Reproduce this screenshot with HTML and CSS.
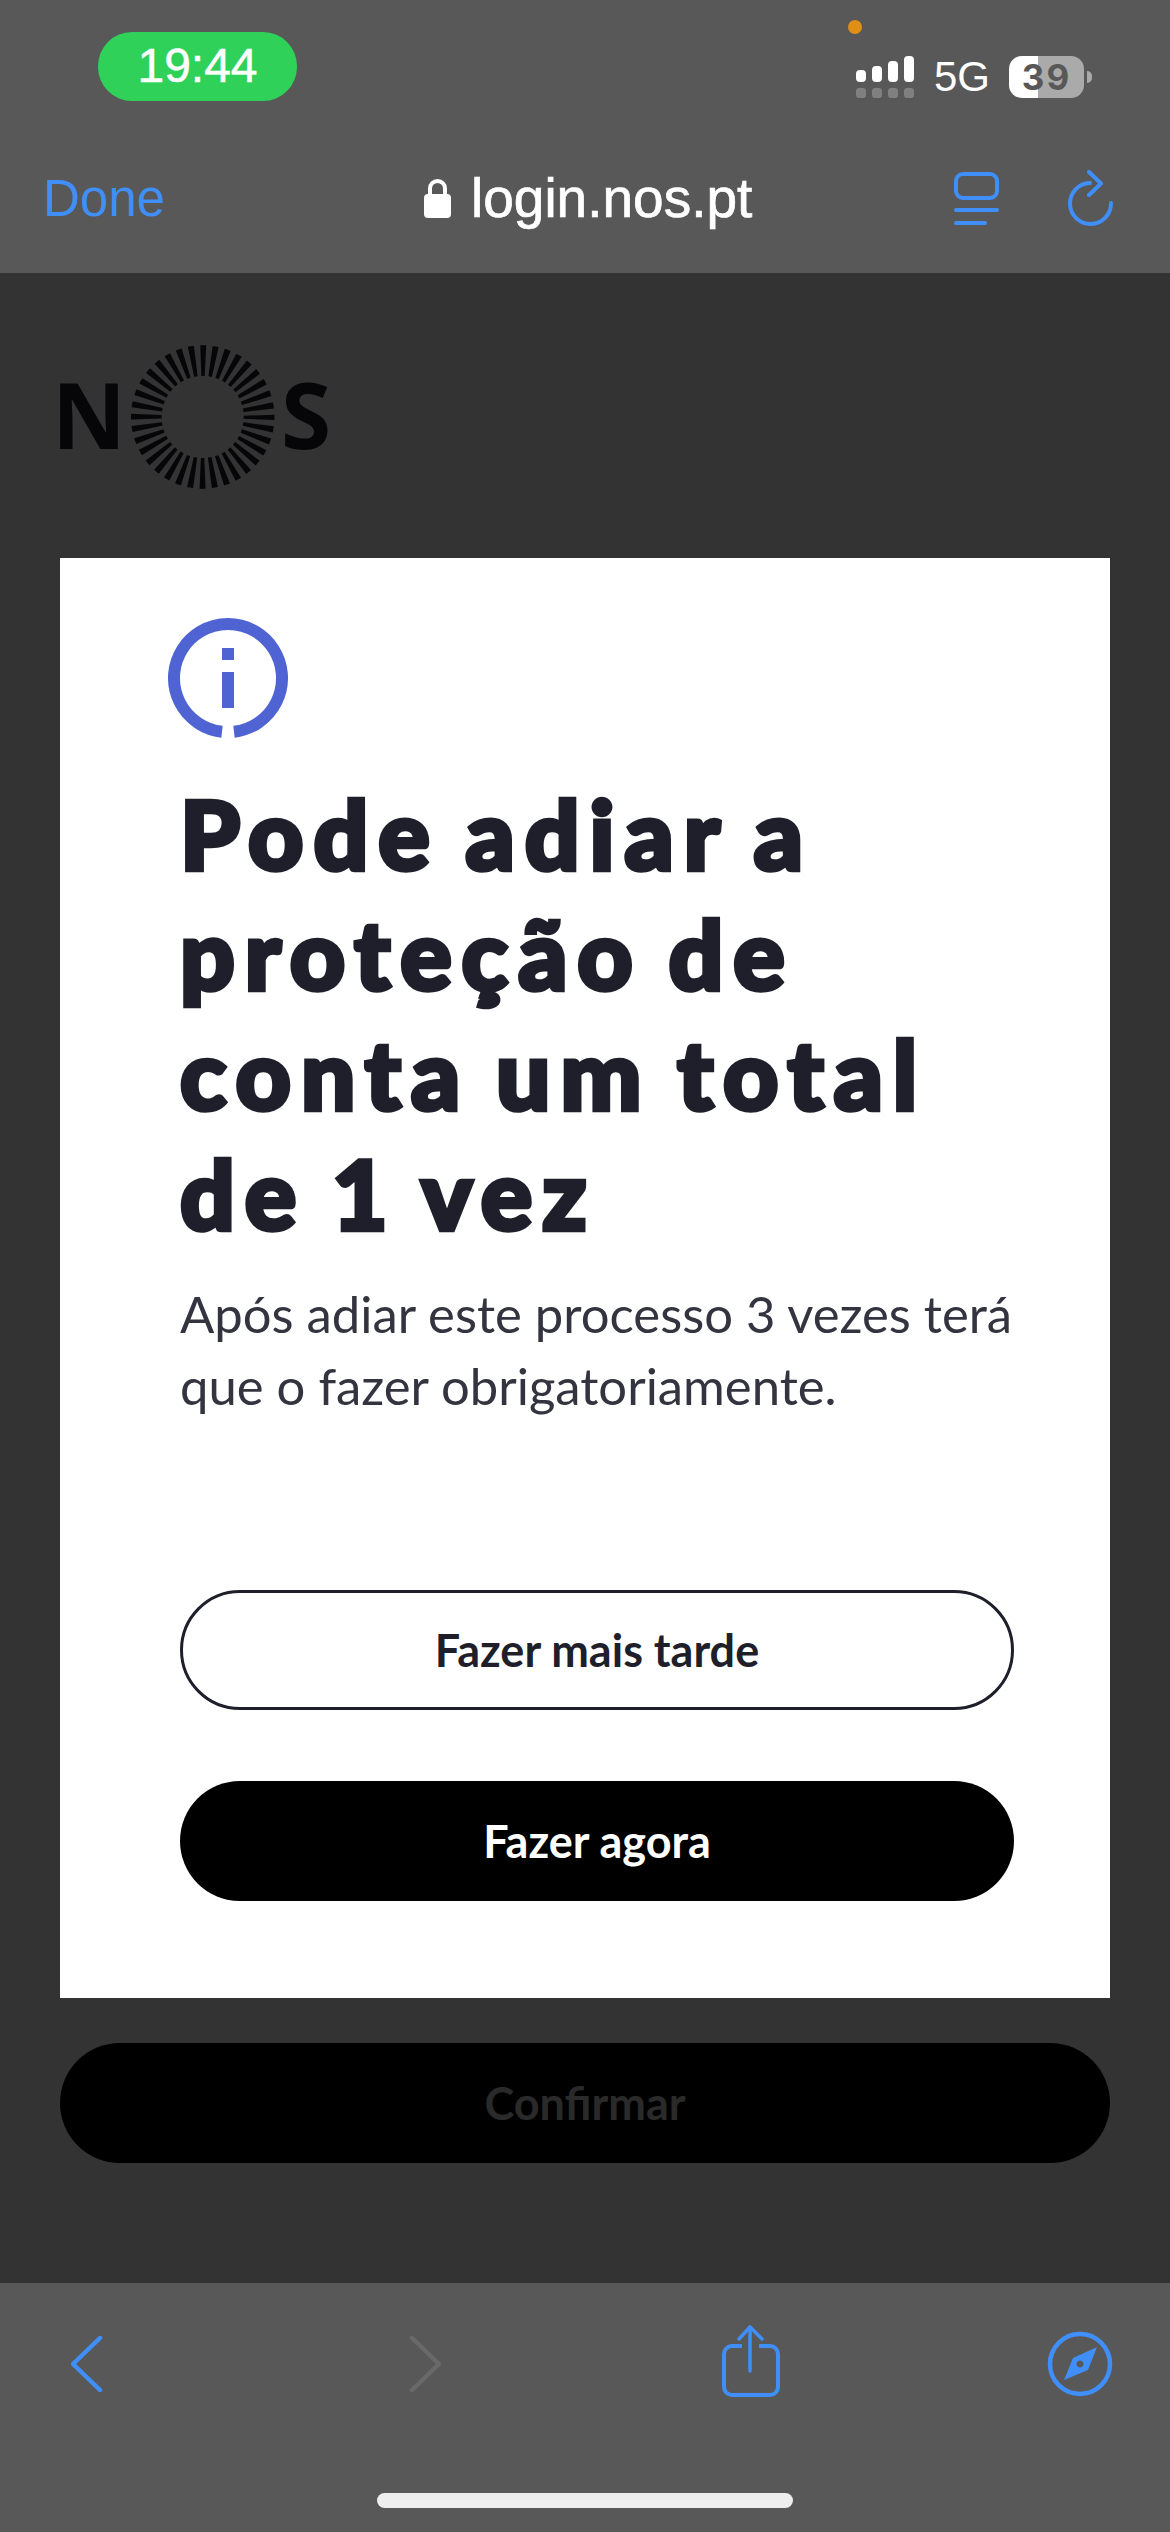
FILE: index.html
```html
<!DOCTYPE html>
<html lang="pt">
<head>
    <meta charset="UTF-8">
    <meta name="viewport" content="width=device-width, initial-scale=1.0">
    <title>login.nos.pt</title>
    <link rel="stylesheet" href="styles.css">
</head>
<body>
    <header class="browser-top">
        <span class="mic-dot"></span>
        <div class="status-row">
            <div class="clock">19:44</div>
            <div class="status-right">
                <svg class="signal" width="58" height="42" viewBox="0 0 58 42">
                    <rect x="0" y="14" width="10" height="12" rx="4" fill="#fff"/>
                    <rect x="16" y="10" width="10" height="16" rx="4" fill="#fff"/>
                    <rect x="32" y="5" width="10" height="21" rx="4" fill="#fff"/>
                    <rect x="48" y="0" width="10" height="26" rx="4" fill="#fff"/>
                    <rect x="0" y="32" width="10" height="10" rx="3" fill="#808080"/>
                    <rect x="16" y="32" width="10" height="10" rx="3" fill="#808080"/>
                    <rect x="32" y="32" width="10" height="10" rx="3" fill="#808080"/>
                    <rect x="48" y="32" width="10" height="10" rx="3" fill="#808080"/>
                </svg>
                <span class="network">5G</span>
                <div class="battery">39</div>
                <span class="battery-nub"></span>
            </div>
        </div>
        <div class="nav-row">
            <span class="done">Done</span>
            <div class="address">
                <svg class="lock" width="27" height="39" viewBox="0 0 27 39">
                    <path d="M6 18V9.500a7.500 7.500 0 0 1 15 0V18" fill="none" stroke="#fff" stroke-width="4"/>
                    <rect x="0" y="15" width="27" height="24" rx="4" fill="#fff"/>
                </svg>
                <span>login.nos.pt</span>
            </div>
            <svg class="tabs-icon" width="45" height="54" viewBox="0 0 45 54">
                <rect x="2" y="2" width="41" height="24" rx="7" fill="none" stroke="#408ef8" stroke-width="4"/>
                <line x1="2" y1="38" x2="43" y2="38" stroke="#408ef8" stroke-width="4" stroke-linecap="round"/>
                <line x1="2" y1="51" x2="31" y2="51" stroke="#408ef8" stroke-width="4" stroke-linecap="round"/>
            </svg>
            <svg class="reload-icon" width="48" height="58" viewBox="0 0 48 58">
                <path d="M44 33A20.500 20.500 0 1 1 23 13" fill="none" stroke="#408ef8" stroke-width="4" stroke-linecap="round"/>
                <path d="M22 2L34 13.500L22 25" fill="none" stroke="#408ef8" stroke-width="4" stroke-linecap="round" stroke-linejoin="round"/>
            </svg>
        </div>
    </header>

    <main class="page">
        <svg class="logo" width="310" height="150" viewBox="0 0 310 150">
            <text class="logo-letter" x="12" y="109">N</text>
            <circle cx="162.700" cy="77" r="56.400" fill="none" stroke="#060608" stroke-width="30.700" stroke-dasharray="4.800 5.044" stroke-dashoffset="2.400"/>
            <text class="logo-letter" x="241" y="109">S</text>
        </svg>

        <section class="card">
            <svg class="info-icon" width="120" height="120" viewBox="0 0 120 120">
                <path d="M54 113.700A54 54 0 1 1 66 113.700" fill="none" stroke="#5063d3" stroke-width="12"/>
                <rect x="54" y="30" width="12" height="12" fill="#5063d3"/>
                <rect x="54" y="54" width="12" height="36" fill="#5063d3"/>
            </svg>
            <h1>Pode adiar a proteção de conta um total de 1 vez</h1>
            <p>Após adiar este processo 3 vezes terá que o fazer obrigatoriamente.</p>
            <button class="btn btn-outline">Fazer mais tarde</button>
            <button class="btn btn-dark">Fazer agora</button>
        </section>

        <button class="btn btn-confirm">Confirmar</button>
    </main>

    <footer class="browser-bottom">
        <div class="toolbar">
            <svg class="tool-back" width="32" height="56" viewBox="0 0 32 56">
                <path d="M29 2L2 28L29 54" fill="none" stroke="#408ef8" stroke-width="4.500" stroke-linecap="round" stroke-linejoin="round"/>
            </svg>
            <svg class="tool-forward" width="32" height="56" viewBox="0 0 32 56">
                <path d="M3 2L30 28L3 54" fill="none" stroke="#696969" stroke-width="4.500" stroke-linecap="round" stroke-linejoin="round"/>
            </svg>
            <svg class="tool-share" width="58" height="72" viewBox="0 0 58 72">
                <path d="M20 21H10a8 8 0 0 0-8 8V62a8 8 0 0 0 8 8H48a8 8 0 0 0 8-8V29a8 8 0 0 0-8-8H37" fill="none" stroke="#408ef8" stroke-width="4"/>
                <line x1="28" y1="2" x2="28" y2="46" stroke="#408ef8" stroke-width="3.500" stroke-linecap="round"/>
                <path d="M17 14L28 2L40 14" fill="none" stroke="#408ef8" stroke-width="3.500" stroke-linecap="round" stroke-linejoin="round"/>
            </svg>
            <svg class="tool-compass" width="68" height="68" viewBox="0 0 68 68">
                <circle cx="34" cy="34" r="30" fill="none" stroke="#408ef8" stroke-width="4.500"/>
                <path fill-rule="evenodd" fill="#408ef8" d="M51 17L42 40L18 50L27 28ZM34 30.500a3.500 3.500 0 1 0 .010 0Z"/>
            </svg>
        </div>
        <div class="home-bar"></div>
    </footer>
</body>
</html>
```

FILE: styles.css
```css
* {
    box-sizing: border-box;
}
body {
    margin: 0;
    width: 1170px;
    height: 2532px;
    display: flex;
    flex-direction: column;
    background-color: #333;
    font-family: "Liberation Sans", Arial, sans-serif;
    overflow: hidden;
}

/* top browser chrome */
.browser-top {
    position: relative;
    height: 273px;
    background-color: #585858;
    color: white;
}
.mic-dot {
    position: absolute;
    left: 848px;
    top: 20px;
    width: 14px;
    height: 14px;
    border-radius: 50%;
    background-color: #e08f16;
}
.status-row {
    display: flex;
    justify-content: space-between;
    align-items: flex-start;
    padding: 32px 78px 0 98px;
}
.clock {
    width: 199px;
    height: 69px;
    border-radius: 34px;
    background-color: #30d158;
    font-size: 48px;
    line-height: 67px;
    text-align: center;
    -webkit-text-stroke: 0.5px white;
}
.status-right {
    display: flex;
    align-items: center;
    margin-top: 24px;
}
.network {
    margin-left: 20px;
    font-size: 42px;
    line-height: 42px;
    width: 75px;
}
.battery {
    width: 75px;
    height: 42px;
    border-radius: 13px;
    background: linear-gradient(90deg, #fff 39%, #aaa 39%);
    color: #585858;
    font-family: Inter, sans-serif;
    font-weight: 700;
    font-size: 35px;
    letter-spacing: 2px;
    line-height: 42px;
    text-align: center;
}
.battery-nub {
    width: 5px;
    height: 12px;
    margin-left: 3px;
    border-radius: 0 5px 5px 0;
    background-color: #aaa;
}
.nav-row {
    display: flex;
    align-items: center;
    height: 60px;
    margin-top: 67px;
    padding-left: 43px;
}
.done {
    width: 381px;
    font-size: 51px;
    color: #408ef8;
}
.address {
    display: flex;
    align-items: center;
    gap: 20px;
    width: 530px;
    font-size: 55px;
    -webkit-text-stroke: 0.7px white;
}
.tabs-icon {
    margin-top: 2px;
}
.reload-icon {
    margin-left: 68px;
    margin-top: 2px;
}

/* page behind the dialog */
.page {
    flex: 1;
    padding: 67px 60px 0;
}
.logo {
    display: block;
    margin-left: -20px;
}
.logo-letter {
    font-family: "Open Sans", Arial, sans-serif;
    font-weight: 700;
    font-size: 91px;
    fill: #060608;
}
.card {
    margin-top: 68px;
    height: 1440px;
    padding: 60px 96px 0 120px;
    background: white;
}
.info-icon {
    display: block;
    margin-left: -12px;
}
h1 {
    margin: 35px 0 0;
    font-family: Lato, sans-serif;
    font-weight: 900;
    font-size: 96px;
    line-height: 120px;
    letter-spacing: 10px;
    word-spacing: -7px;
    -webkit-text-stroke: 4.500px #1e1f2a;
    color: #1e1f2a;
}
p {
    margin: 25px 0 0;
    font-family: Lato, sans-serif;
    font-size: 50.800px;
    line-height: 72px;
    color: #33343f;
}
.btn {
    display: block;
    width: 834px;
    height: 120px;
    border-radius: 60px;
    border: none;
    padding: 0;
    font-family: Lato, sans-serif;
    font-weight: 700;
    font-size: 45px;
}
.btn-outline {
    margin-top: 168px;
    background: white;
    border: 3px solid #1e1f2a;
    color: #1e1f2a;
}
.btn-dark {
    margin-top: 71px;
    background-color: black;
    color: white;
}
.btn-confirm {
    width: 1050px;
    margin-top: 45px;
    background-color: black;
    color: #2a2a2a;
}

/* bottom browser chrome */
.browser-bottom {
    height: 249px;
    background-color: #585858;
}
.toolbar {
    display: flex;
    align-items: flex-start;
    height: 210px;
    padding-top: 42px;
}
.tool-back {
    margin-left: 71px;
    margin-top: 11px;
}
.tool-forward {
    margin-left: 306px;
    margin-top: 11px;
}
.tool-share {
    margin-left: 281px;
}
.tool-compass {
    margin-left: 266px;
    margin-top: 5px;
}
.home-bar {
    width: 416px;
    height: 15px;
    margin-left: 377px;
    border-radius: 8px;
    background-color: #eee;
}
```
